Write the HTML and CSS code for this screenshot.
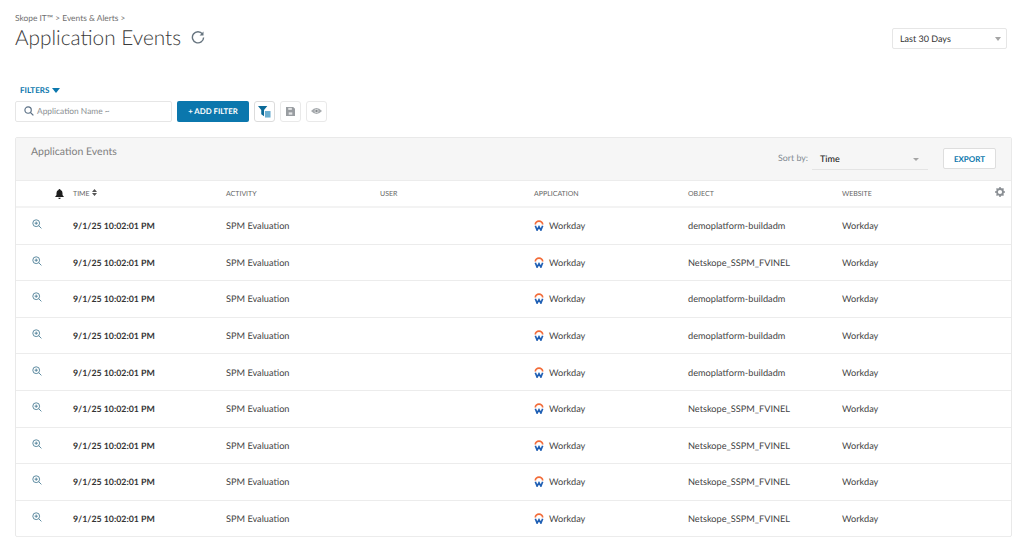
FILE: index.html
```html
<!DOCTYPE html>
<html lang="en">
<head>
    <meta charset="UTF-8">
    <title>Application Events</title>
    <link rel="stylesheet" href="styles.css">
</head>
<body>
    <svg class="defs" width="0" height="0">
        <symbol id="zoom" viewBox="0 0 10 10">
            <circle cx="4.2" cy="4.2" r="3.4" fill="none" stroke="#4d7f96" stroke-width=".9"/>
            <path d="M6.7 6.7 9.4 9.4M2.6 4.2h3.2M4.2 2.6v3.2" fill="none" stroke="#4d7f96" stroke-width=".9"/>
        </symbol>
        <symbol id="workday" viewBox="0 0 12 13">
            <path d="M1.6 5.2a4.4 4 0 0 1 8.800 0" fill="none" stroke="#f26b38" stroke-width="2"/>
            <path d="M1.600 6.800 3.700 12 6 8 8.300 12 10.400 6.800" fill="none" stroke="#1f5fb4" stroke-width="2"/>
        </symbol>
    </svg>

    <div class="crumbs">Skope IT™ &gt; Events &amp; Alerts &gt;</div>
    <div class="top">
        <h1 class="title">Application Events</h1>
        <svg class="reload" width="14" height="14" viewBox="0 0 15 15">
            <path d="M12.3 4.2A6 6 0 1 0 13.5 8" fill="none" stroke="#66747f" stroke-width="1.5"/>
            <path d="M13.4 1.6v4.2H9.2z" fill="#66747f"/>
        </svg>
        <div class="range">Last 30 Days<span class="caret"></span></div>
    </div>

    <div class="filters-label">FILTERS <span class="filters-caret"></span></div>
    <div class="filters">
        <div class="search">
            <svg width="10" height="10" viewBox="0 0 11 11">
                <circle cx="4.5" cy="4.5" r="3.500" fill="none" stroke="#5c7186" stroke-width="1.300"/>
                <path d="M7 7l3.300 3.300" stroke="#5c7186" stroke-width="1.500"/>
            </svg>
            Application Name ~
        </div>
        <div class="add">+ ADD FILTER</div>
        <div class="tool tool-first">
            <svg width="13" height="13" viewBox="0 0 14 14">
                <path d="M0 1h10L6.500 5.500V12L3.500 10V5.500z" fill="#0b6a98"/>
                <rect x="7.500" y="6.500" width="6" height="7" fill="#6aaed0"/>
            </svg>
        </div>
        <div class="tool">
            <svg width="9" height="9" viewBox="0 0 10 10">
                <path d="M0 0h8l2 2v8H0z" fill="#999da1"/>
                <rect x="2.500" y="1" width="4" height="2.200" fill="#e4e5e6"/>
                <rect x="3" y="6" width="4" height="2.500" fill="#e4e5e6"/>
            </svg>
        </div>
        <div class="tool">
            <svg width="11" height="8" viewBox="0 0 11 8">
                <path d="M0 4q5.500-6 11 0q-5.500 6-11 0z" fill="#a5a9ad"/>
                <circle cx="5.500" cy="4" r="2" fill="#e4e5e6"/>
                <circle cx="5.500" cy="4" r="1.200" fill="#85898d"/>
            </svg>
        </div>
    </div>

    <div class="panel">
        <div class="panel-head">
            <div class="panel-title">Application Events</div>
            <div class="sort-label">Sort by:</div>
            <div class="sort">Time<span class="caret"></span></div>
            <div class="export">EXPORT</div>
        </div>
        <div class="row row-head">
            <div class="bell">
                <svg width="9" height="10" viewBox="0 0 9 10">
                    <path d="M4.500 0a1 1 0 0 1 1 1q2 .6 2 3v2l1.500 2H0l1.500-2V4q0-2.400 2-3a1 1 0 0 1 1-1zM3.300 8.800h2.400a1.200 1.200 0 0 1-2.400 0z" fill="#1d1d1d"/>
                </svg>
            </div>
            <div class="time-head">TIME
                <svg width="5" height="7" viewBox="0 0 5 7"><path d="M2.500 0 5 3H0zM0 4h5L2.500 7z" fill="#555"/></svg>
            </div>
            <div>ACTIVITY</div>
            <div>USER</div>
            <div>APPLICATION</div>
            <div>OBJECT</div>
            <div>WEBSITE</div>
            <svg class="gear" width="10" height="10" viewBox="0 0 10 10">
                <circle cx="5" cy="5" r="3" fill="none" stroke="#8a8f94" stroke-width="1.800"/>
                <path d="M5 0v2M5 8v2M0 5h2M8 5h2M1.500 1.500l1.400 1.400M7.100 7.100l1.400 1.400M8.500 1.500 7.100 2.900M2.900 7.100 1.500 8.500" stroke="#8a8f94" stroke-width="1.500"/>
            </svg>
        </div>
        <div class="row"><div class="zoom"><svg width="10" height="10"><use href="#zoom"/></svg></div><div class="time">9/1/25 10:02:01 PM</div><div>SPM Evaluation</div><div></div><div class="app"><svg width="10" height="11"><use href="#workday"/></svg>Workday</div><div>demoplatform-buildadm</div><div>Workday</div></div>
        <div class="row"><div class="zoom"><svg width="10" height="10"><use href="#zoom"/></svg></div><div class="time">9/1/25 10:02:01 PM</div><div>SPM Evaluation</div><div></div><div class="app"><svg width="10" height="11"><use href="#workday"/></svg>Workday</div><div>Netskope_SSPM_FVINEL</div><div>Workday</div></div>
        <div class="row"><div class="zoom"><svg width="10" height="10"><use href="#zoom"/></svg></div><div class="time">9/1/25 10:02:01 PM</div><div>SPM Evaluation</div><div></div><div class="app"><svg width="10" height="11"><use href="#workday"/></svg>Workday</div><div>demoplatform-buildadm</div><div>Workday</div></div>
        <div class="row"><div class="zoom"><svg width="10" height="10"><use href="#zoom"/></svg></div><div class="time">9/1/25 10:02:01 PM</div><div>SPM Evaluation</div><div></div><div class="app"><svg width="10" height="11"><use href="#workday"/></svg>Workday</div><div>demoplatform-buildadm</div><div>Workday</div></div>
        <div class="row"><div class="zoom"><svg width="10" height="10"><use href="#zoom"/></svg></div><div class="time">9/1/25 10:02:01 PM</div><div>SPM Evaluation</div><div></div><div class="app"><svg width="10" height="11"><use href="#workday"/></svg>Workday</div><div>demoplatform-buildadm</div><div>Workday</div></div>
        <div class="row"><div class="zoom"><svg width="10" height="10"><use href="#zoom"/></svg></div><div class="time">9/1/25 10:02:01 PM</div><div>SPM Evaluation</div><div></div><div class="app"><svg width="10" height="11"><use href="#workday"/></svg>Workday</div><div>Netskope_SSPM_FVINEL</div><div>Workday</div></div>
        <div class="row"><div class="zoom"><svg width="10" height="10"><use href="#zoom"/></svg></div><div class="time">9/1/25 10:02:01 PM</div><div>SPM Evaluation</div><div></div><div class="app"><svg width="10" height="11"><use href="#workday"/></svg>Workday</div><div>Netskope_SSPM_FVINEL</div><div>Workday</div></div>
        <div class="row"><div class="zoom"><svg width="10" height="10"><use href="#zoom"/></svg></div><div class="time">9/1/25 10:02:01 PM</div><div>SPM Evaluation</div><div></div><div class="app"><svg width="10" height="11"><use href="#workday"/></svg>Workday</div><div>Netskope_SSPM_FVINEL</div><div>Workday</div></div>
        <div class="row"><div class="zoom"><svg width="10" height="10"><use href="#zoom"/></svg></div><div class="time">9/1/25 10:02:01 PM</div><div>SPM Evaluation</div><div></div><div class="app"><svg width="10" height="11"><use href="#workday"/></svg>Workday</div><div>Netskope_SSPM_FVINEL</div><div>Workday</div></div>
    </div>
</body>
</html>
```

FILE: styles.css
```css
* {
    box-sizing: border-box;
}
html, body {
    height: 537px;
    overflow: hidden;
}
body {
    margin: 0;
    padding: 13px 12px 0 15px;
    background-color: #fff;
    font-family: Lato, "Liberation Sans", sans-serif;
    font-size: 9px;
    color: #333;
    text-rendering: geometricPrecision;
}
.defs {
    position: absolute;
}
.crumbs {
    height: 10px;
    line-height: 10px;
    font-size: 8.4px;
    color: #6f6f6f;
}
.top {
    display: flex;
    align-items: center;
    margin-top: 2px;
    height: 26px;
    padding-right: 5px;
}
.title {
    margin: 0 0 2px;
    font-size: 20.8px;
    font-weight: 300;
    color: #3a3a3a;
}
.reload {
    margin-left: 10px;
    margin-bottom: 2px;
}
.range {
    position: relative;
    margin-left: auto;
    width: 115px;
    height: 21px;
    padding-left: 7px;
    line-height: 20px;
    border: 1px solid #e6e6e6;
    border-radius: 2px;
    color: #333;
}
.caret {
    position: absolute;
    right: 5px;
    top: 8px;
    border-left: 3px solid transparent;
    border-right: 3px solid transparent;
    border-top: 4px solid #a5a5a5;
}
.filters-label {
    margin-top: 34px;
    margin-left: 5px;
    height: 11px;
    line-height: 11px;
    font-size: 8px;
    font-weight: 700;
    color: #0b77ad;
}
.filters-caret {
    display: inline-block;
    margin-left: 1px;
    border-left: 4px solid transparent;
    border-right: 4px solid transparent;
    border-top: 5px solid #0b77ad;
}
.filters {
    display: flex;
    align-items: center;
    margin-top: 4px;
    height: 22px;
}
.search {
    display: flex;
    align-items: center;
    gap: 3px;
    width: 157px;
    height: 21px;
    padding-left: 8px;
    font-size: 8.4px;
    border: 1px solid #e6e6e6;
    border-radius: 2px;
    color: #8b8f94;
}
.add {
    width: 72px;
    height: 21px;
    margin-left: 5px;
    line-height: 21px;
    text-align: center;
    font-size: 7.8px;
    font-weight: 700;
    color: #fff;
    background-color: #0b77ad;
    border-radius: 2px;
}
.tool {
    display: flex;
    align-items: center;
    justify-content: center;
    width: 21px;
    height: 21px;
    margin-left: 5px;
    border: 1px solid #e9e9e9;
    border-radius: 3px;
}
.tool-first {
    border-color: #dcdcdc;
}
.panel {
    margin-top: 15px;
    height: 400px;
    border: 1px solid #e9e9e9;
    border-radius: 2px;
}
.panel-head {
    display: flex;
    align-items: flex-start;
    height: 43px;
    padding: 8px 15px 0;
    background-color: #f6f6f6;
    border-bottom: 1px solid #ececec;
}
.panel-title {
    font-size: 10.5px;
    line-height: 13px;
    color: #808080;
}
.sort-label {
    margin-left: auto;
    margin-top: 6px;
    margin-right: -1px;
    font-size: 8.8px;
    color: #808890;
}
.sort {
    position: relative;
    width: 116px;
    height: 21px;
    margin-left: 5px;
    margin-top: 3px;
    padding-left: 8px;
    line-height: 20px;
    font-weight: 500;
    color: #222;
    border-bottom: 1px solid #e4e4e4;
}
.sort .caret {
    right: 9px;
    top: 9px;
    border-top-width: 3px;
}
.export {
    width: 53px;
    height: 21px;
    margin-left: 15px;
    margin-top: 2px;
    line-height: 20px;
    text-align: center;
    font-size: 8px;
    font-weight: 700;
    color: #0b77ad;
    background-color: #fff;
    border: 1px solid #dedede;
    border-radius: 2px;
}
.row {
    position: relative;
    display: grid;
    grid-template-columns: 57px 153px 154px 154px 154px 154px 1fr;
    align-items: center;
    height: 36.6px;
    border-bottom: 1px solid #ececec;
    font-size: 9.2px;
    color: #444;
}
.row-head {
    height: 27px;
    border-bottom-width: 2px;
    border-bottom-color: #f3f3f3;
    font-size: 7px;
    color: #666;
}
.bell {
    text-align: right;
    padding-right: 9px;
    line-height: 0;
}
.time-head svg {
    margin-left: 1px;
}
.gear {
    position: absolute;
    right: 6px;
    top: 6px;
}
.zoom {
    padding-left: 16px;
    line-height: 0;
    margin-top: -3px;
}
.time {
    font-size: 8.8px;
    font-weight: 700;
    color: #333;
}
.app {
    display: flex;
    align-items: center;
    gap: 5px;
}
```
